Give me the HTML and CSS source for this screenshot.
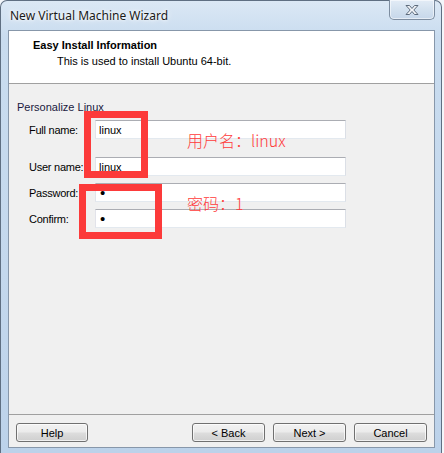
FILE: index.html
```
<!DOCTYPE html>
<html>
<head>
<meta charset="utf-8">
<link rel="stylesheet" href="styles.css">
</head>
<body>
<div class="window">
  <div class="titlebar">
    <span class="title">New Virtual Machine Wizard</span>
    <div class="close">
      <svg width="16" height="12" viewBox="0 0 16 12"><path d="M2 1.5h3.5L8 4.5l2.5-3H14L9.8 6 14 10.5h-3.5L8 7.5 5.5 10.5H2L6.2 6Z" fill="#f4f6f9" stroke="#5d6b7c" stroke-width="1" stroke-linejoin="round"/></svg>
    </div>
  </div>
  <div class="client">
    <div class="header">
      <div class="h-title">Easy Install Information</div>
      <div class="h-sub">This is used to install Ubuntu 64-bit.</div>
    </div>
    <div class="body">
      <div class="group">Personalize Linux</div>
      <div class="form">
        <label class="lbl">Full name:</label>
        <input class="field" type="text" value="linux" readonly>
        <label class="lbl row2">User name:</label>
        <input class="field row2" type="text" value="linux" readonly>
        <label class="lbl row3">Password:</label>
        <input class="field row3" type="password" value="1" readonly>
        <label class="lbl row3">Confirm:</label>
        <input class="field row3" type="password" value="1" readonly>
      </div>
      <div class="mark mark1"></div>
      <div class="mark mark2"></div>
      <div class="note note1">用户名：linux</div>
      <div class="note note2">密码：1</div>
    </div>
    <div class="footer">
      <button class="btn">Help</button>
      <div class="spacer"></div>
      <button class="btn">&lt; Back</button>
      <button class="btn">Next &gt;</button>
      <button class="btn">Cancel</button>
    </div>
  </div>
</div>
</body>
</html>
```
FILE: styles.css
```
* { box-sizing: border-box; }
html, body { margin: 0; padding: 0; }
body {
  width: 444px;
  height: 453px;
  overflow: hidden;
  background: #f3f6fa;
  font-family: "Liberation Sans", Arial, sans-serif;
  font-size: 11px;
  color: #000;
}
.window {
  width: 442px;
  height: 453px;
  border: 1px solid #5f6f82;
  border-bottom: none;
  border-radius: 7px 7px 0 0;
  background: linear-gradient(180deg, #dbe8f5 0%, #c9dcef 8%, #c4d8ed 60%, #bcd2ea 100%);
  padding: 0 6px 5px 7px;
  display: flex;
  flex-direction: column;
}
.titlebar {
  height: 29px;
  display: flex;
  align-items: flex-start;
  justify-content: space-between;
}
.title {
  margin-left: 2px;
  margin-top: 7px;
  font-family: "Noto Sans", "Open Sans", sans-serif;
  font-size: 12px;
  line-height: 16px;
  color: #1a1a1a;
  text-shadow: 0 0 6px #fff, 0 0 3px #fff;
}
.close {
  width: 46px;
  height: 20px;
  margin-top: -1px;
  border: 1px solid #7d8da0;
  border-top: none;
  border-radius: 0 0 5px 5px;
  background: linear-gradient(180deg, #e3ecf6 0%, #d3e1ef 50%, #c6d7ea 100%);
  box-shadow: inset 0 0 0 1px rgba(255,255,255,0.55);
  display: flex;
  align-items: center;
  justify-content: center;
}
.client {
  flex: 1;
  border: 1px solid #8797aa;
  background: #f0f0f0;
  display: flex;
  flex-direction: column;
}
.header {
  height: 53px;
  background: #fff;
  border-bottom: 1px solid #a0a0a0;
  padding: 7px 0 0 24px;
}
.h-title {
  font-weight: bold;
  line-height: 14px;
}
.h-sub {
  margin-top: 2px;
  padding-left: 24px;
  line-height: 14px;
}
.body {
  flex: 1;
  position: relative;
  padding: 16px 0 0 8px;
}
.group {
  line-height: 14px;
  color: #1a1a40;
}
.form {
  margin: 6px 0 0 12px;
  display: grid;
  grid-template-columns: 66px 251px;
  align-items: center;
}
.lbl {
  line-height: 14px;
  white-space: nowrap;
  letter-spacing: -0.25px;
}
.field {
  height: 19px;
  width: 251px;
  margin: 0;
  padding: 0 0 0 3px;
  font-family: "Liberation Sans", Arial, sans-serif;
  font-size: 11px;
  color: #000;
  background: #fff;
  border: 1px solid #e3e9ef;
  border-top-color: #abadb3;
  border-left-color: #e2e3ea;
  border-right-color: #dbdfe6;
  outline: none;
}
.field[type="password"] {
  font-size: 15px;
  padding-left: 4px;
}
.row2 { margin-top: 18px; }
.row3 { margin-top: 7px; }
.mark {
  position: absolute;
  border: 7px solid #fc3a3a;
}
.mark1 { left: 75px; top: 27px; width: 64px; height: 67px; }
.mark2 { left: 70px; top: 100px; width: 83px; height: 55px; }
.note {
  position: absolute;
  left: 178px;
  font-family: "Noto Sans CJK SC", "Liberation Sans", sans-serif;
  font-size: 16px;
  line-height: 22px;
  color: #ff3b3b;
  font-weight: 300;
}
.note1 { top: 45px; }
.note2 { top: 108px; }
.footer {
  height: 33px;
  border-top: 1px solid #a0a0a0;
  padding: 8px 7px 0 7px;
  display: flex;
  gap: 8px;
  align-items: flex-start;
}
.spacer { flex: 1; }
.btn {
  width: 73px;
  height: 19px;
  margin: 0;
  padding: 0;
  font-family: "Liberation Sans", Arial, sans-serif;
  font-size: 11px;
  color: #000;
  border: 1px solid #707070;
  border-radius: 3px;
  background: linear-gradient(180deg, #f2f2f2 0%, #ebebeb 48%, #dddddd 52%, #cfcfcf 100%);
  box-shadow: inset 0 0 0 1px rgba(255,255,255,0.7);
}
.btn:first-child { width: 72px; }
```
